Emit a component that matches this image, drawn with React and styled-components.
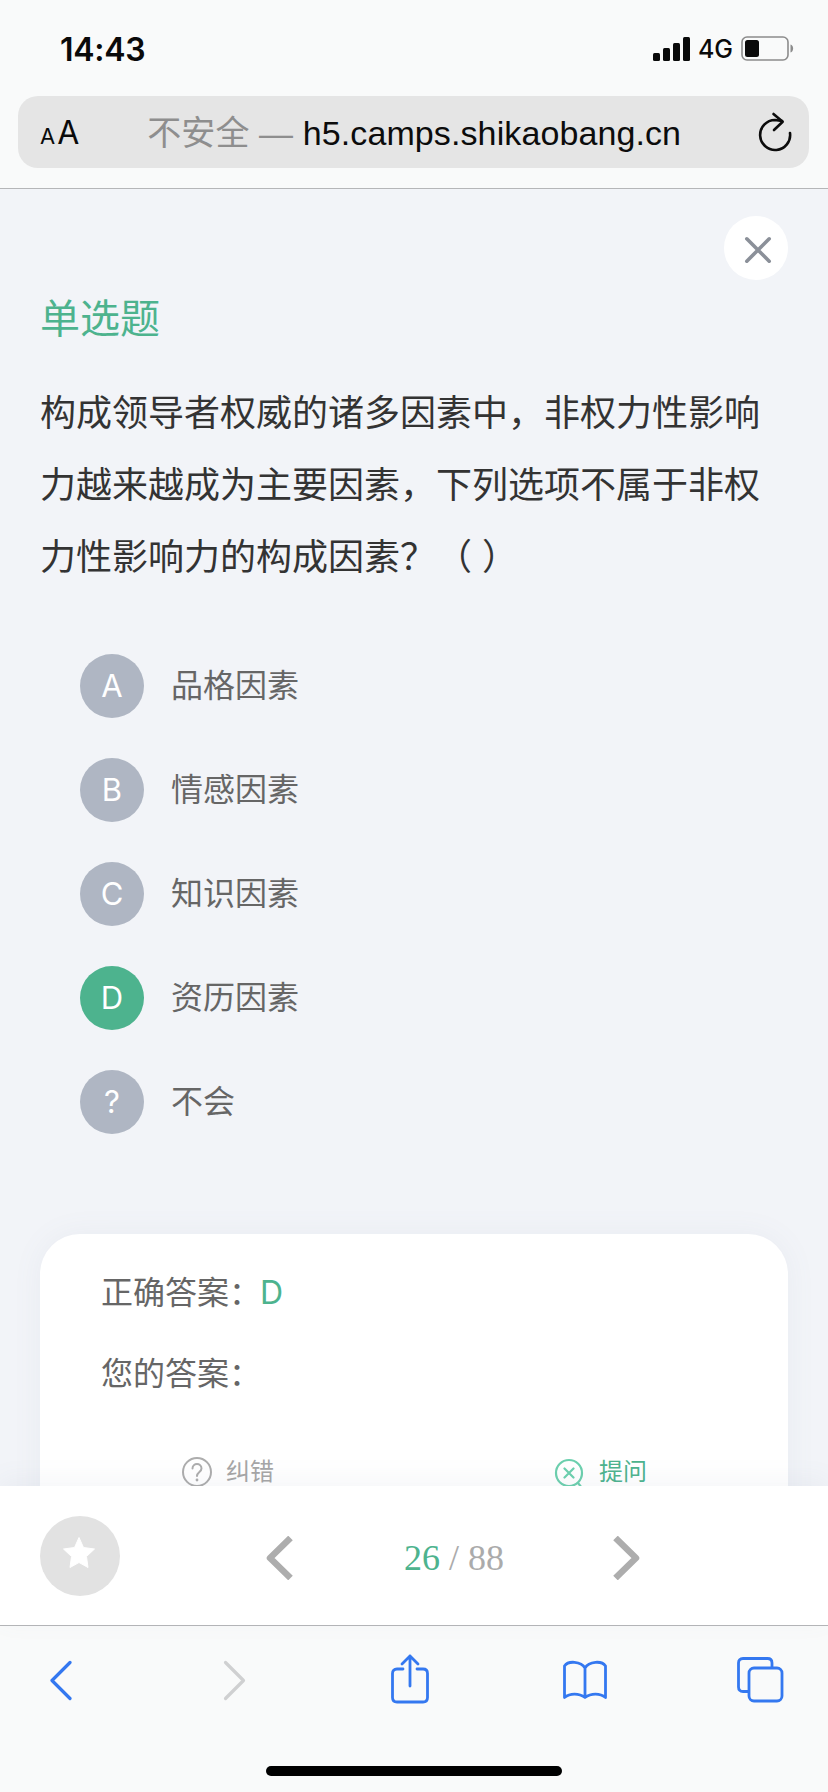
import React from "react";
import styled, { createGlobalStyle } from "styled-components";

const SANS = `Inter, "Noto Sans CJK SC", sans-serif`;
const CJK = `"Liberation Sans", "Noto Sans CJK SC", sans-serif`;

const Global = createGlobalStyle`
  html, body { margin: 0; padding: 0; background: #f2f4f8; }
  * { box-sizing: border-box; }
`;

const Phone = styled.div`
  width: 828px; height: 1792px; display: flex; flex-direction: column; overflow: hidden;
  font-family: ${CJK}; background: #f2f4f8;
`;

const TopChrome = styled.header`
  height: 189px; flex: none; background: #f9fafa; border-bottom: 1px solid #b5b6b8;
  padding: 0 19px 0 18px; display: flex; flex-direction: column;
`;
const StatusBar = styled.div`
  height: 96px; flex: none; display: flex; align-items: flex-start; justify-content: space-between;
  padding: 31px 14px 0 42px;
`;
const Time = styled.span`
  font: 600 32px/38px ${SANS}; color: #0a0a0a; letter-spacing: -0.3px;
`;
const StatusRight = styled.div`
  display: flex; align-items: center; gap: 8px; height: 40px; margin-top: -2px;
`;
const Net = styled.span`
  font: 500 25px/28px ${SANS}; color: #0a0a0a; letter-spacing: 0;
`;
const UrlBar = styled.div`
  height: 72px; flex: none; border-radius: 20px; background: #e5e5e5;
  display: flex; align-items: center; padding: 0 17px 0 22px;
`;
const AaGroup = styled.div`
  display: flex; align-items: baseline; gap: 2px; color: #0a0a0a; margin-top: 5px;
`;
const AaSmall = styled.span`font: 400 22px/36px ${SANS};`;
const AaBig = styled.span`font: 400 32px/36px ${SANS};`;
const UrlText = styled.div`
  flex: 1; padding-left: 68px; margin-top: 1px; white-space: nowrap; font: 400 34px/40px "Liberation Sans", "Noto Sans CJK SC", sans-serif;
  color: #0c0c0c; letter-spacing: 0.1px;
`;
const Insecure = styled.span`color: #8e8e8e;`;

const Content = styled.main`
  flex: 1; min-height: 0; overflow: hidden; padding: 27px 40px 0;
  display: flex; flex-direction: column;
`;
const CloseButton = styled.div`
  width: 64px; height: 64px; border-radius: 50%; background: #fff; align-self: flex-end; padding: 4px 0 0 4px;
  display: flex; align-items: center; justify-content: center; flex: none;
`;
const Kind = styled.div`
  font-size: 40px; line-height: 56px; color: #4db38e; margin-top: 11px;
`;
const Question = styled.p`
  margin: 31px 0 0; width: 740px; font-size: 36px; line-height: 72px; color: #333;
`;
const Options = styled.ul`
  list-style: none; margin: 60px 0 0; padding: 0 0 0 40px; display: flex; flex-direction: column; gap: 40px;
`;
const Option = styled.li`
  display: flex; align-items: center; gap: 27px; height: 64px;
`;
const Badge = styled.span`
  width: 64px; height: 64px; border-radius: 50%; flex: none; display: flex; align-items: center; justify-content: center;
  font: 400 31px/40px ${SANS}; color: #fff; background: ${p => (p.$active ? "#4db38e" : "#afb6c3")};
`;
const OptionText = styled.span`
  font-size: 32px; line-height: 44px; color: #666;
`;
const Card = styled.section`
  margin: 100px 0 0; width: 748px; flex: none; height: 400px; background: #fff; border-radius: 40px;
  box-shadow: 0 0 30px rgba(120, 130, 150, 0.07); padding: 37px 61px 0;
`;
const AnswerRow = styled.div`
  font-size: 32px; line-height: 44px; color: #666; height: 44px; margin-bottom: 37px;
`;
const Correct = styled.span`
  color: #4db38e; font-family: ${SANS}; margin-left: -1px;
`;
const CardActions = styled.div`
  margin-top: 59px; padding-left: 80px; display: flex; align-items: center;
`;
const CardAction = styled.div`
  display: flex; align-items: center; gap: 13px; font-size: 24px; line-height: 24px;
  color: ${p => (p.$green ? "#4db38e" : "#a6a6a6")}; width: ${p => (p.$green ? "auto" : "373px")};
`;

const Pager = styled.div`
  height: 139px; flex: none; background: #fff; display: flex; align-items: center; position: relative;
  padding: 0 0 0 40px; box-shadow: 0 -6px 24px rgba(120, 130, 150, 0.07);
`;
const StarButton = styled.div`
  width: 80px; height: 80px; border-radius: 50%; background: #e2e2e2; display: flex; align-items: center; justify-content: center; flex: none;
  padding: 0 2px 5px 0;
`;
const PagerNav = styled.div`
  display: flex; align-items: center; margin: 4px 0 0 146px; width: 374px; justify-content: space-between;
`;
const PageCount = styled.div`
  font: 400 36px/44px "Liberation Serif", serif; color: #ababab; white-space: nowrap; padding-left: 2px;
`;
const PageNow = styled.span`color: #4db38e;`;

const BottomChrome = styled.footer`
  height: 167px; flex: none; background: #f9fafa; border-top: 1px solid #b5b6b8;
`;
const Tools = styled.div`
  display: flex; align-items: flex-start; padding: 28px 0 0 49px; height: 120px;
`;
const ToolIcon = styled.svg`
  flex: none; fill: none; stroke: ${p => p.$color || "#3478f0"}; stroke-width: ${p => p.$sw || 2.8}px;
  stroke-linecap: round; stroke-linejoin: round;
  margin-left: ${p => p.$left || 0}px; margin-top: ${p => p.$top || 0}px;
`;
const HomeIndicator = styled.div`
  width: 296px; height: 10px; border-radius: 5px; background: #000; margin: 20px 0 0 266px;
`;

const PagerChevron = ({ left }) => (
  <svg width="27" height="44" viewBox="0 0 27 44" fill="none">
    <path d={left ? "M24.5 2 L4 22 L24.5 42" : "M2.5 2 L23 22 L2.5 42"} stroke="#adadad" strokeWidth="6.5" strokeLinejoin="round" />
  </svg>
);

export default function App() {
  return (
    <Phone>
      <Global />
      <TopChrome>
        <StatusBar>
          <Time>14:43</Time>
          <StatusRight>
            <svg width="37" height="24" viewBox="0 0 37 24">
              <rect x="0" y="16" width="7" height="8" rx="1.5" fill="#0a0a0a" />
              <rect x="10" y="11" width="7" height="13" rx="1.5" fill="#0a0a0a" />
              <rect x="20" y="6" width="7" height="18" rx="1.5" fill="#0a0a0a" />
              <rect x="30" y="0" width="7" height="24" rx="1.5" fill="#0a0a0a" />
            </svg>
            <Net>4G</Net>
            <svg width="54" height="26" viewBox="0 0 54 26">
              <rect x="1" y="1" width="46" height="23" rx="5" fill="none" stroke="#8c8c8c" strokeWidth="1.6" />
              <rect x="4" y="4" width="14" height="17" rx="2.5" fill="#0a0a0a" />
              <path d="M49.5 8.5 C53 9.5 53 15.5 49.5 16.5 Z" fill="#8c8c8c" />
            </svg>
          </StatusRight>
        </StatusBar>
        <UrlBar>
          <AaGroup><AaSmall>A</AaSmall><AaBig>A</AaBig></AaGroup>
          <UrlText><Insecure>不安全 — </Insecure>h5.camps.shikaobang.cn</UrlText>
          <svg width="34" height="40" viewBox="0 0 34 40" fill="none" stroke="#0c0c0c" strokeWidth="2.6" strokeLinecap="round" strokeLinejoin="round">
            <path d="M32 21 A15 15 0 1 1 17 8 L24 9" />
            <path d="M15.5 2 L24.7 9.7 L16 18" />
          </svg>
        </UrlBar>
      </TopChrome>

      <Content>
        <CloseButton>
          <svg width="30" height="30" viewBox="0 0 30 30" stroke="#8b9099" strokeWidth="3.6" strokeLinecap="round">
            <path d="M3.8 3.8 L26.2 26.2 M26.2 3.8 L3.8 26.2" />
          </svg>
        </CloseButton>
        <Kind>单选题</Kind>
        <Question>构成领导者权威的诸多因素中，非权力性影响力越来越成为主要因素，下列选项不属于非权力性影响力的构成因素？（ ）</Question>
        <Options>
          <Option><Badge>A</Badge><OptionText>品格因素</OptionText></Option>
          <Option><Badge>B</Badge><OptionText>情感因素</OptionText></Option>
          <Option><Badge>C</Badge><OptionText>知识因素</OptionText></Option>
          <Option><Badge $active>D</Badge><OptionText>资历因素</OptionText></Option>
          <Option><Badge>?</Badge><OptionText>不会</OptionText></Option>
        </Options>
        <Card>
          <AnswerRow>正确答案：<Correct>D</Correct></AnswerRow>
          <AnswerRow>您的答案：</AnswerRow>
          <CardActions>
            <CardAction>
              <svg width="32" height="32" viewBox="0 0 32 32" fill="none">
                <circle cx="16" cy="16" r="14" stroke="#adadad" strokeWidth="2" />
                <path d="M11.5 12.5 C11.5 6.5 20.5 6.5 20.5 12.5 C20.5 16 16 16 16 20" stroke="#adadad" strokeWidth="2" strokeLinecap="round" />
                <circle cx="16" cy="24" r="1.4" fill="#adadad" />
              </svg>
              纠错
            </CardAction>
            <CardAction $green>
              <svg width="32" height="34" viewBox="0 0 32 34" fill="none" stroke="#6cd0ae" strokeWidth="2.2" strokeLinecap="round">
                <circle cx="15" cy="18" r="13" />
                <path d="M10.5 13.5 L19.5 22.5 M19.5 13.5 L10.5 22.5 M24 28 L28 33" />
              </svg>
              提问
            </CardAction>
          </CardActions>
        </Card>
      </Content>

      <Pager>
        <StarButton>
          <svg width="34" height="34" viewBox="0 0 34 34">
            <path d="M17 1.5 L21.5 11.5 L32.5 13 L24.5 20.5 L26 31.5 L17 26.5 L8 31.5 L9.5 20.5 L1.5 13 L12.5 11.5 Z" fill="#fff" stroke="#fff" strokeWidth="1" strokeLinejoin="round" />
          </svg>
        </StarButton>
        <PagerNav>
          <PagerChevron left />
          <PageCount><PageNow>26</PageNow> / 88</PageCount>
          <PagerChevron />
        </PagerNav>
      </Pager>

      <BottomChrome>
        <Tools>
          <ToolIcon width="23" height="41" viewBox="0 0 23 41" $sw={3.2} $top={6}>
            <path d="M21 2.5 L3 20.5 L21 38.5" />
          </ToolIcon>
          <ToolIcon width="23" height="41" viewBox="0 0 23 41" $sw={3.2} $top={6} $left={151} $color="#cfd0d1">
            <path d="M2.5 2.5 L20.5 20.5 L2.5 38.5" />
          </ToolIcon>
          <ToolIcon width="40" height="50" viewBox="0 0 40 50" $left={144}>
            <path d="M13 15 H7 Q2.5 15 2.5 19.5 V43.5 Q2.5 48 7 48 H33 Q37.5 48 37.5 43.5 V19.5 Q37.5 15 33 15 H27" />
            <path d="M20 32 V2 M12 10 L20 2 L28 10" />
          </ToolIcon>
          <ToolIcon width="46" height="40" viewBox="0 0 46 40" $left={132} $top={6}>
            <path d="M23 8 C19 1 6 0.5 2.5 6 V37.5 C8 33 17 33 23 37.5 C29 33 38 33 43.5 37.5 V6 C40 0.5 27 1 23 8 V37" />
          </ToolIcon>
          <ToolIcon width="48" height="47" viewBox="0 0 48 47" $left={128} $top={2}>
            <path d="M12 35.5 H7 Q2.5 35.5 2.5 31 V7 Q2.5 2.5 7 2.5 H31.5 Q36 2.5 36 7 V11" />
            <rect x="13" y="12" width="33" height="33" rx="5" />
          </ToolIcon>
        </Tools>
        <HomeIndicator />
      </BottomChrome>
    </Phone>
  );
}
